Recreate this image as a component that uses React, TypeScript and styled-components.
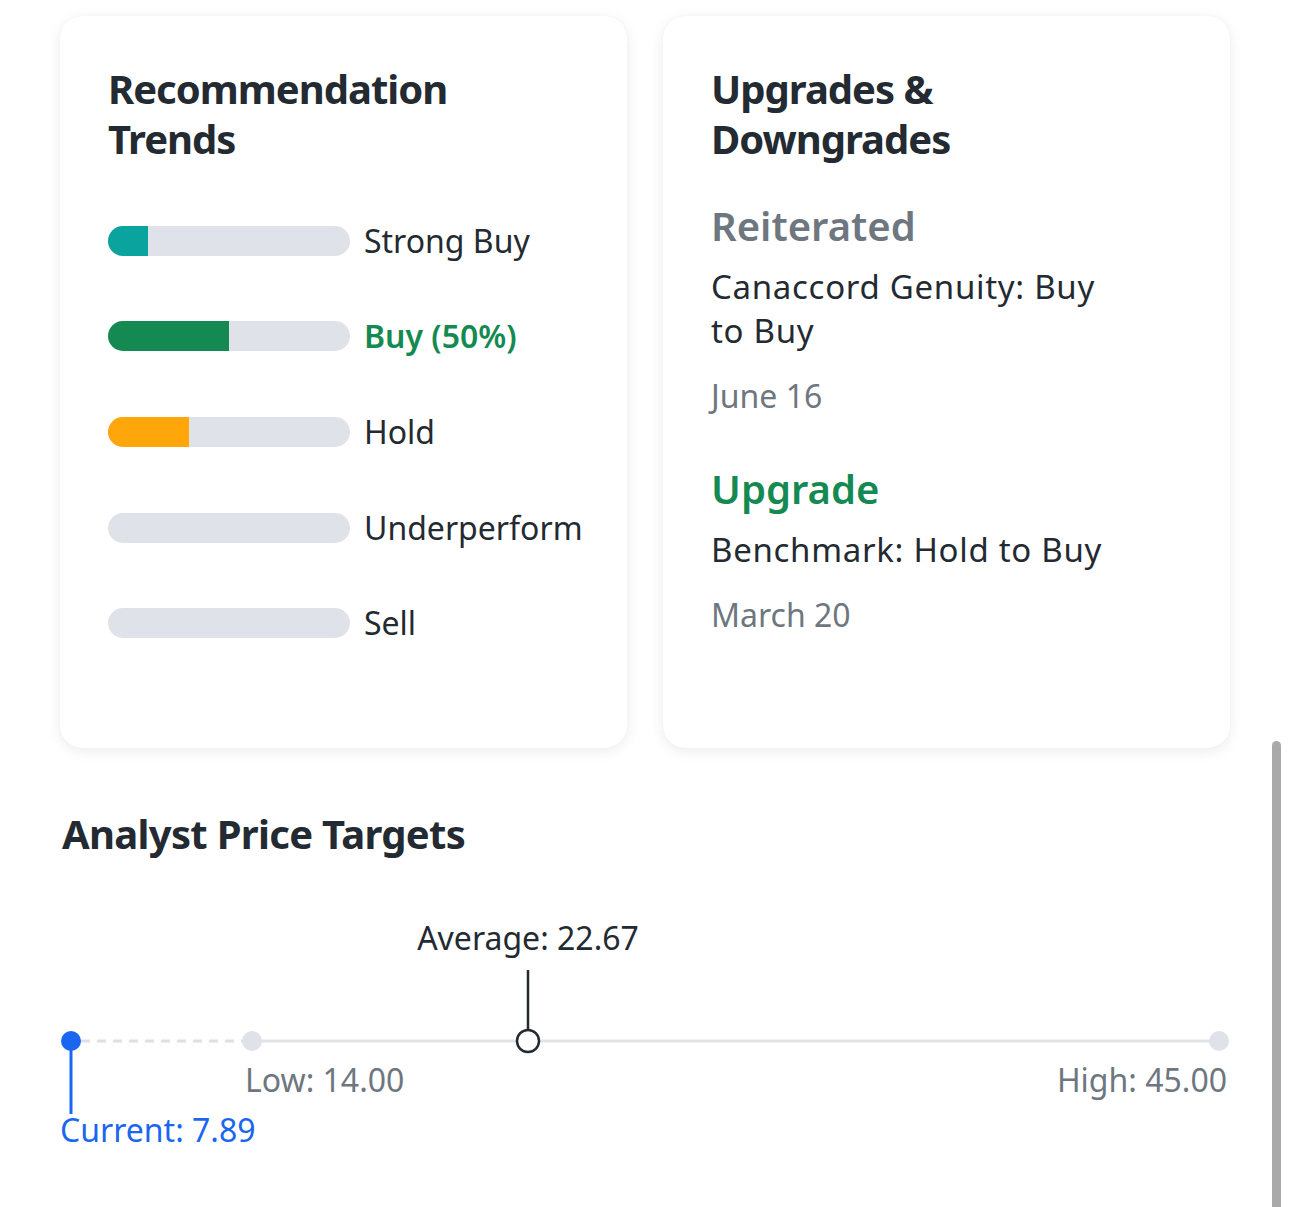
import React from 'react';
import styled, { createGlobalStyle } from 'styled-components';

const GlobalStyle = createGlobalStyle`
  html, body {
    margin: 0;
    padding: 0;
    background: #ffffff;
  }
  body {
    font-family: 'Noto Sans', 'Open Sans', Arial, sans-serif;
    color: #232a31;
  }
`;

type Trend = { label: string; pct: number; color: string; active?: boolean };

const trends: Trend[] = [
  { label: 'Strong Buy', pct: 16.5, color: '#0aa39e' },
  { label: 'Buy (50%)', pct: 50, color: '#148a52', active: true },
  { label: 'Hold', pct: 33.5, color: '#ffa60a' },
  { label: 'Underperform', pct: 0, color: '#dfe2e8' },
  { label: 'Sell', pct: 0, color: '#dfe2e8' },
];

type Rating = { action: string; tone: 'neutral' | 'up'; detail: string; date: string };

const ratings: Rating[] = [
  { action: 'Reiterated', tone: 'neutral', detail: 'Canaccord Genuity: Buy to Buy', date: 'June 16' },
  { action: 'Upgrade', tone: 'up', detail: 'Benchmark: Hold to Buy', date: 'March 20' },
];

function App() {
  return (
    <Page>
      <GlobalStyle />
      <CardGrid>
        <Card>
          <CardTitle>
            Recommendation
            <br />
            Trends
          </CardTitle>
          <TrendList>
            {trends.map((t) => (
              <TrendRow key={t.label}>
                <Track>
                  <Fill $color={t.color} style={{ width: `${t.pct}%` }} />
                </Track>
                <TrendLabel $active={t.active}>{t.label}</TrendLabel>
              </TrendRow>
            ))}
          </TrendList>
        </Card>
        <Card>
          <CardTitle>
            Upgrades &amp;
            <br />
            Downgrades
          </CardTitle>
          <RatingList>
            {ratings.map((r) => (
              <RatingItem key={r.action}>
                <Action $tone={r.tone}>{r.action}</Action>
                <Detail>{r.detail}</Detail>
                <DateText>{r.date}</DateText>
              </RatingItem>
            ))}
          </RatingList>
        </Card>
      </CardGrid>

      <SectionTitle>Analyst Price Targets</SectionTitle>

      <Chart>
        <svg width="1170" height="250" viewBox="0 0 1170 250">
          <line x1="21" y1="140" x2="186" y2="140" stroke="#dcdfe4" strokeWidth="3" strokeDasharray="9 7" />
          <line x1="192" y1="140" x2="1159" y2="140" stroke="#e0e3e8" strokeWidth="3" />
          <circle cx="192" cy="140" r="10" fill="#dfe2e8" />
          <circle cx="1159" cy="140" r="10" fill="#dfe2e8" />
          <line x1="11" y1="140" x2="11" y2="213" stroke="#1a66f0" strokeWidth="3" />
          <circle cx="11" cy="140" r="10" fill="#1a66f0" />
          <line x1="468" y1="69" x2="468" y2="129" stroke="#232a31" strokeWidth="2.5" />
          <circle cx="468" cy="140" r="11" fill="#ffffff" stroke="#232a31" strokeWidth="2.5" />
        </svg>
        <AverageLabel>Average: 22.67</AverageLabel>
        <RangeLabel $side="left">Low: 14.00</RangeLabel>
        <RangeLabel $side="right">High: 45.00</RangeLabel>
        <CurrentLabel>Current: 7.89</CurrentLabel>
      </Chart>

      <ScrollThumb />
    </Page>
  );
}

export default App;

const Page = styled.main`
  position: relative;
  width: 1290px;
  height: 1207px;
  box-sizing: border-box;
  padding: 16px 60px 0;
  overflow: hidden;
`;

const CardGrid = styled.section`
  display: grid;
  grid-template-columns: minmax(0, 1fr) minmax(0, 1fr);
  gap: 36px;
`;

const Card = styled.article`
  background: #ffffff;
  border-radius: 22px;
  box-shadow: 0 3px 14px rgba(0, 0, 0, 0.08), 0 0 1px rgba(0, 0, 0, 0.06);
  padding: 48px 48px 101px;
  display: flex;
  flex-direction: column;
`;

const CardTitle = styled.h2`
  margin: 0;
  font-size: 40px;
  line-height: 50px;
  font-weight: 700;
  letter-spacing: -1px;
  color: #232a31;
`;

const TrendList = styled.div`
  display: flex;
  flex-direction: column;
  gap: 47.7px;
  margin-top: 52.5px;
`;

const TrendRow = styled.div`
  display: flex;
  align-items: center;
  gap: 14px;
  height: 48px;
`;

const Track = styled.div`
  width: 242px;
  height: 30px;
  border-radius: 15px;
  background: #dfe2e8;
  overflow: hidden;
  flex-shrink: 0;
`;

const Fill = styled.div<{ $color: string }>`
  height: 100%;
  background: ${(p) => p.$color};
`;

const TrendLabel = styled.span<{ $active?: boolean }>`
  font-size: 32px;
  line-height: 48px;
  font-weight: ${(p) => (p.$active ? 600 : 400)};
  color: ${(p) => (p.$active ? '#148a52' : '#232a31')};
  white-space: nowrap;
`;

const RatingList = styled.div`
  display: flex;
  flex-direction: column;
  gap: 46px;
  margin-top: 37px;
`;

const RatingItem = styled.div`
  display: flex;
  flex-direction: column;
`;

const Action = styled.div<{ $tone: 'neutral' | 'up' }>`
  font-size: 40px;
  line-height: 50px;
  font-weight: 600;
  color: ${(p) => (p.$tone === 'up' ? '#148a52' : '#6e7780')};
`;

const Detail = styled.div`
  margin-top: 14px;
  max-width: 420px;
  font-size: 33px;
  line-height: 44px;
  letter-spacing: 0.7px;
  color: #232a31;
`;

const DateText = styled.div`
  margin-top: 21px;
  font-size: 32px;
  line-height: 44px;
  color: #6e7780;
`;

const SectionTitle = styled.h2`
  margin: 61px 0 0 2px;
  font-size: 40px;
  line-height: 50px;
  font-weight: 700;
  letter-spacing: -0.7px;
  color: #232a31;
`;

const Chart = styled.div`
  position: relative;
  margin-top: 42px;
  width: 1170px;
  height: 250px;
  svg {
    position: absolute;
    left: 0;
    top: 0;
  }
`;

const ChartText = styled.span`
  position: absolute;
  font-size: 32px;
  line-height: 44px;
  white-space: nowrap;
`;

const AverageLabel = styled(ChartText)`
  left: 468px;
  top: 15px;
  transform: translateX(-50%);
  color: #232a31;
`;

const RangeLabel = styled(ChartText)<{ $side: 'left' | 'right' }>`
  top: 157px;
  color: #6e7780;
  ${(p) => (p.$side === 'left' ? 'left: 185px;' : 'right: 3px;')}
`;

const CurrentLabel = styled(ChartText)`
  left: 0;
  top: 207px;
  color: #1a66f0;
`;

const ScrollThumb = styled.div`
  position: absolute;
  right: 9px;
  top: 741px;
  width: 9px;
  height: 500px;
  border-radius: 5px;
  background: #a9a9a9;
`;
